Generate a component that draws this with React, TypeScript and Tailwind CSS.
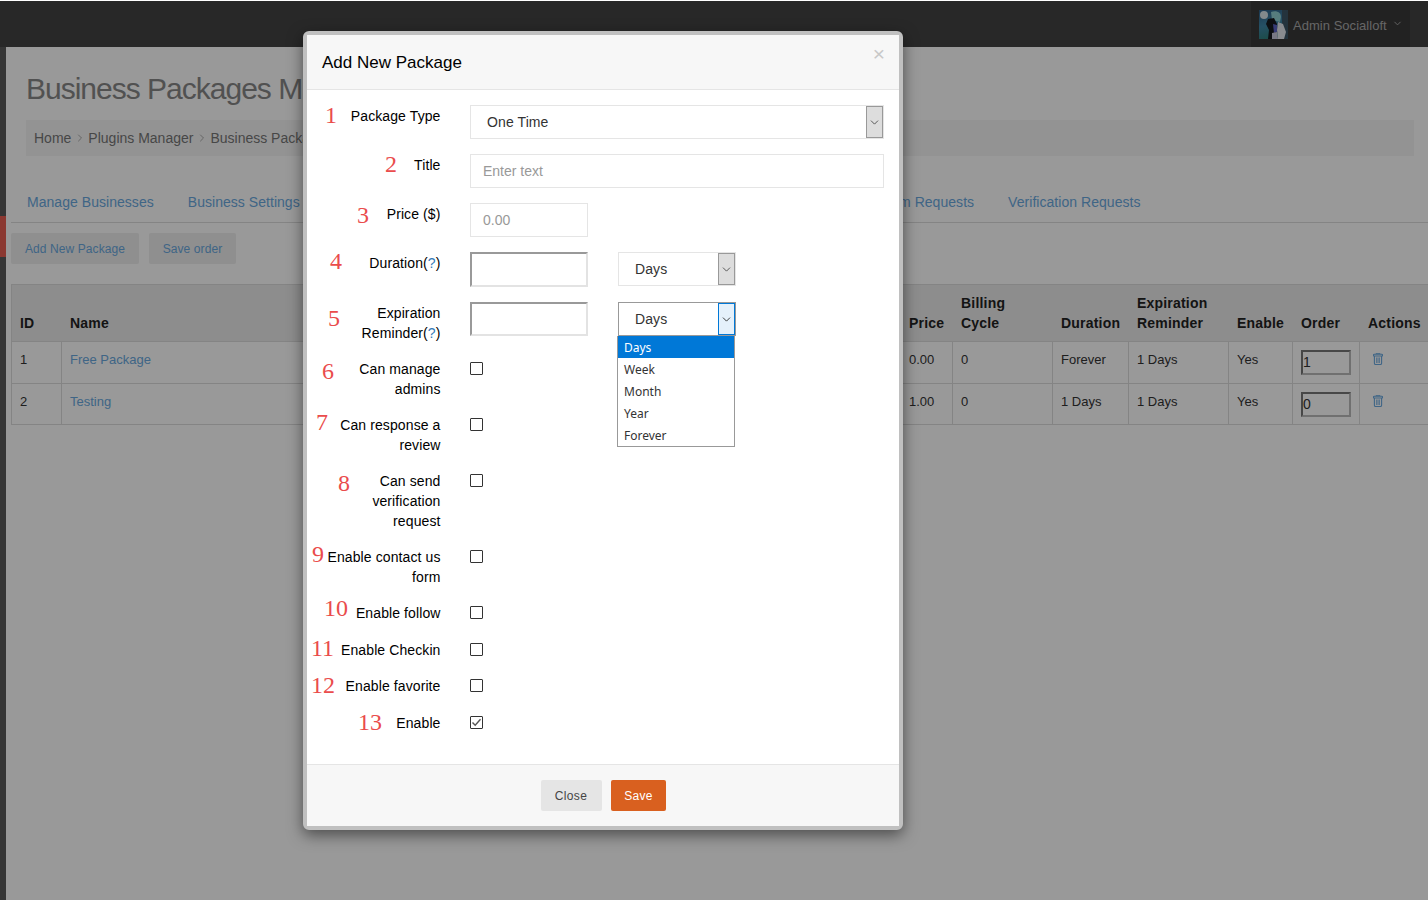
import { ChevronDown, ChevronRight } from "lucide-react"

const font = "font-['Liberation_Sans',Arial,sans-serif]"

const rows = [
  { n: "1", pos: "left-[18px] -top-[2px]", label: ["Package Type"], kind: "type", cls: "h-[34px] mb-[15px]" },
  { n: "2", pos: "left-[78px] -top-[2px]", label: ["Title"], kind: "title", cls: "h-[34px] mb-[15px]" },
  { n: "3", pos: "left-[50px] top-0", label: ["Price ($)"], kind: "price", cls: "h-[34px] mb-[15px]" },
  { n: "4", pos: "left-[23px] -top-[3px]", label: ["Duration(?)"], kind: "duration", cls: "h-[35px] mb-[15px]" },
  { n: "5", pos: "left-[21px] top-[4px]", label: ["Expiration", "Reminder(?)"], kind: "reminder", cls: "h-[41px] mb-[15px]" },
  { n: "6", pos: "left-[15px] top-[1px]", label: ["Can manage", "admins"], kind: "check", cls: "h-[41px] mb-[15px]" },
  { n: "7", pos: "left-[9px] -top-[4px]", label: ["Can response a", "review"], kind: "check", cls: "h-[41px] mb-[15px]" },
  { n: "8", pos: "left-[31px] top-[1px]", label: ["Can send", "verification", "request"], kind: "check", cls: "h-[61px] mb-[15px]" },
  { n: "9", pos: "left-[5px] -top-[4px]", label: ["Enable contact us", "form"], kind: "check", cls: "h-[41px] mb-[15px]" },
  { n: "10", pos: "left-[17px] -top-[6px]", label: ["Enable follow"], kind: "check", cls: "h-[21px] mb-[15.6px]" },
  { n: "11", pos: "left-[4px] -top-[3px]", label: ["Enable Checkin"], kind: "check", cls: "h-[21px] mb-[15.6px]" },
  { n: "12", pos: "left-[4px] -top-[2px]", label: ["Enable favorite"], kind: "check", cls: "h-[21px] mb-[15.6px]" },
  { n: "13", pos: "left-[51px] -top-[2px]", label: ["Enable"], kind: "checked", cls: "h-[21px] mb-[16.2px]" },
]

const packages = [
  { id: "1", name: "Free Package", price: "0.00", duration: "Forever", order: "1", h: "h-[42px]" },
  { id: "2", name: "Testing", price: "1.00", duration: "1 Days", order: "0", h: "h-[41px]" },
]

function Avatar() {
  return (
    <svg width="29" height="29" viewBox="0 0 29 29" className="block">
      <defs>
        <linearGradient id="night" x1="0" y1="0" x2="0.3" y2="1">
          <stop offset="0" stopColor="#2f5f88" />
          <stop offset="0.55" stopColor="#3f86a8" />
          <stop offset="1" stopColor="#2f7f7a" />
        </linearGradient>
      </defs>
      <rect width="29" height="29" fill="url(#night)" />
      <path d="M23 0h6v29h-4l-2-15z" fill="#3c5566" />
      <circle cx="5" cy="5" r="4" fill="#d9e4ea" />
      <path d="M12 2c5-2 10 0 10 5l-1 5-8-2z" fill="#8fd0d2" />
      <path d="M9 9l6-1 3 6 1 7-3 8H9l1-9-3-6z" fill="#16191f" />
      <path d="M19 12l5 2 3 8-2 7h-6l-1-9z" fill="#e4e8ef" />
      <path d="M14 14l4 1v7l-3 1z" fill="#5b63c4" />
      <path d="M13 23l5-1 1 7h-6z" fill="#c9c9dc" />
    </svg>
  )
}

function TrashIcon() {
  return (
    <svg width="10" height="12" viewBox="0 0 10 12" fill="none" stroke="currentColor" className="block">
      <rect x="0.5" y="1.2" width="9" height="1.8" rx="0.8" strokeWidth="1.1" />
      <path d="M1.4 3v7.2c0 .8.5 1.3 1.2 1.3h4.8c.7 0 1.2-.5 1.2-1.3V3" strokeWidth="1.1" />
      <path d="M3.6 4.5v5.5M5 4.5v5.5M6.4 4.5v5.5" strokeWidth="0.8" />
      <path d="M3 1V.5h4V1" strokeWidth="0.8" />
    </svg>
  )
}

function SelectBox({ value, focused }: { value: string; focused?: boolean }) {
  return (
    <div className={`flex h-full w-full items-center border bg-white pl-4 text-[14px] tracking-[0.1px] text-[#333] ${focused ? "border-[#999]" : "border-[#e5e5e5]"}`}>
      <span className="flex-1">{value}</span>
      <span className={`flex h-full w-[17px] items-center justify-center border ${focused ? "border-[#0078d7] bg-[#e5f1fb] text-[#222]" : "border-[#999] bg-[#ddd] text-[#444]"}`}>
        <ChevronDown size={13} strokeWidth={1.6} />
      </span>
    </div>
  )
}

function Checkbox({ checked }: { checked?: boolean }) {
  return (
    <span className="mt-[4px] flex h-[13px] w-[13px] items-center justify-center rounded-[1px] border border-[#333] bg-white">
      {checked && (
        <svg width="11" height="11" viewBox="0 0 11 11" fill="none" stroke="#555" strokeWidth="1.4">
          <path d="M1.5 5.5l2.7 2.8 5.3-6" />
        </svg>
      )}
    </span>
  )
}

function Control({ kind }: { kind: string }) {
  if (kind === "type")
    return (
      <div className="h-[34px] w-[414px]">
        <SelectBox value="One Time" />
      </div>
    )
  if (kind === "title")
    return <div className="flex h-[34px] w-[414px] items-center border border-[#e5e5e5] pl-3 text-[14px] text-[#999]">Enter text</div>
  if (kind === "price")
    return <div className="flex h-[34px] w-[118px] items-center border border-[#e5e5e5] pl-3 text-[14px] text-[#999]">0.00</div>
  if (kind === "duration" || kind === "reminder") {
    const focused = kind === "reminder"
    return (
      <div className="flex gap-[30px]">
        <div className={`w-[118px] border-2 border-t-[#999] border-r-[#e3e3e3] border-b-[#e3e3e3] border-l-[#999] ${focused ? "h-[34px]" : "h-[35px]"}`} />
        <div className="relative h-[34px] w-[118px]">
          <SelectBox value="Days" focused={focused} />
          {focused && (
            <ul className="absolute left-[-1px] top-[34px] z-10 w-[118px] border border-t-0 border-[#999] bg-white font-['Noto_Sans',sans-serif] text-[12px] leading-[22px] text-[#333]">
              <li className="h-[22px] bg-[#0078d7] pl-[6px] pt-px text-white">Days</li>
              <li className="h-[22px] pl-[6px] pt-px">Week</li>
              <li className="h-[22px] pl-[6px] pt-px">Month</li>
              <li className="h-[22px] pl-[6px] pt-px">Year</li>
              <li className="h-[22px] pl-[6px] pt-px">Forever</li>
            </ul>
          )}
        </div>
      </div>
    )
  }
  return <Checkbox checked={kind === "checked"} />
}

function Label({ text }: { text: string }) {
  if (text.endsWith("(?)")) {
    return (
      <div>
        {text.slice(0, -3)}(<span className="text-[#337ab7]">?</span>)
      </div>
    )
  }
  return <div>{text}</div>
}

function PackageModal() {
  return (
    <div className="absolute left-[303px] top-[31px] z-20 w-[600px] rounded-[6px] border-4 border-[#c0c0c0] bg-white shadow-[0_5px_15px_rgba(0,0,0,0.5)]">
      <div className="flex h-[55px] items-start justify-between border-b border-[#e5e5e5] bg-[#f7f7f7] pl-[15px] pr-[14px]">
        <h4 className="pt-[18px] text-[17px] leading-5 text-black">Add New Package</h4>
        <span className="pt-[7px] text-[21px] leading-6 text-[#c8c8c8]">×</span>
      </div>
      <div className="py-[15px]">
        {rows.map((r) => (
          <div key={r.n} className={`flex ${r.cls}`}>
            <div className="relative w-[133.5px] pt-px text-right text-[14px] leading-5 tracking-[0.1px] text-black">
              <span className={`absolute font-['Liberation_Serif',serif] text-[24px] leading-6 tracking-normal text-[#ea4c4c] ${r.pos}`}>{r.n}</span>
              {r.label.map((l) => (
                <Label key={l} text={l} />
              ))}
            </div>
            <div className="ml-[29.5px]">
              <Control kind={r.kind} />
            </div>
          </div>
        ))}
      </div>
      <div className="flex h-[62px] items-center justify-center gap-[9px] border-t border-[#e5e5e5] bg-[#f7f7f7]">
        <button className="h-[31px] w-[61px] rounded-[2px] bg-[#e5e5e5] pt-[2px] text-[12px] tracking-[0.4px] text-[#444]">Close</button>
        <button className="h-[31px] w-[55px] rounded-[2px] bg-[#d9601f] pl-px pt-[2px] text-[12px] tracking-[0.3px] text-white">Save</button>
      </div>
    </div>
  )
}

export default function App() {
  return (
    <div className={`relative h-[900px] overflow-hidden bg-white pt-px ${font}`}>
      <header className="flex h-[46px] justify-end bg-[#444] pr-[18px]">
        <div className="flex w-[159px] items-center bg-[#3a3a3a] pl-2 text-[13px] tracking-[0.03px] text-[#aaa]">
          <Avatar />
          <span className="ml-[5px] pt-[4px]">Admin Socialloft</span>
          <ChevronDown size={11} className="ml-[5px] -mt-[2px]" />
        </div>
      </header>

      <div className="flex h-[853px]">
        <aside className="w-[6px] shrink-0 bg-[#5a5a5a] pt-[169px]">
          <div className="h-[41px] bg-[#e85e53]" />
        </aside>
        <main className="min-w-0 flex-1 bg-white pt-[22px]">
          <h1 className="ml-[20px] whitespace-nowrap text-[30px] leading-[40px] tracking-[-1px] text-[#888]">Business Packages Manager</h1>
          <div className="ml-[20px] mr-[14px] mt-[11px] flex h-[36px] items-center gap-[2.5px] bg-[#f5f5f5] pl-2 text-[14px] text-[#777]">
            <span>Home</span>
            <ChevronRight size={12} className="text-[#aaa]" />
            <span>Plugins Manager</span>
            <ChevronRight size={12} className="text-[#aaa]" />
            <span>Business Packages</span>
          </div>
          <nav className="ml-[5px] mt-[28px] flex h-[39px] gap-[34px] whitespace-nowrap border-b border-[#ddd] pl-4 pt-[8px] text-[14px] leading-5 tracking-[0.04px] text-[#6aa9e0]">
            <span>Manage Businesses</span>
            <span>Business Settings</span>
            <span className="ml-[541px]">Claim Requests</span>
            <span>Verification Requests</span>
          </nav>
          <div className="ml-[5px] mt-[10px] flex gap-[10px] text-[12px] tracking-[0.1px] text-[#6aa9e0]">
            <span className="flex h-[31px] w-[128px] items-center justify-center rounded-[2px] bg-[#eee]">Add New Package</span>
            <span className="flex h-[31px] w-[87px] items-center justify-center rounded-[2px] bg-[#eee]">Save order</span>
          </div>
          <table className="ml-[5px] mt-[20px] w-[1439px] table-fixed border-collapse border border-[#ddd] text-[13px] text-[#333]">
            <colgroup>
              <col className="w-[50px]" />
              <col className="w-[839px]" />
              <col className="w-[52px]" />
              <col className="w-[100px]" />
              <col className="w-[76px]" />
              <col className="w-[100px]" />
              <col className="w-[64px]" />
              <col className="w-[67px]" />
              <col className="w-[91px]" />
            </colgroup>
            <thead>
              <tr className="h-[57px] border-b border-[#ddd] bg-[#ececec] text-left align-bottom text-[14px] font-bold leading-5 tracking-[0.2px] text-[#222]">
                <th className="pb-2 pl-2 pr-0">ID</th>
                <th className="pb-2 pl-[8.5px] pr-0">Name</th>
                <th className="pb-2 pl-[8.5px] pr-0">Price</th>
                <th className="pb-2 pl-[8.5px] pr-0">Billing<br />Cycle</th>
                <th className="pb-2 pl-[8.5px] pr-0">Duration</th>
                <th className="pb-2 pl-[8.5px] pr-0">Expiration<br />Reminder</th>
                <th className="pb-2 pl-[8.5px] pr-0">Enable</th>
                <th className="pb-2 pl-[8.5px] pr-0">Order</th>
                <th className="pb-2 pl-[8.5px] pr-0">Actions</th>
              </tr>
            </thead>
            <tbody>
              {packages.map((p) => (
                <tr key={p.id} className={`${p.h} border-b border-[#ddd] align-top leading-5`}>
                  <td className="border-r border-[#ddd] px-2 pt-2">{p.id}</td>
                  <td className="border-r border-[#ddd] px-2 pt-2 text-[#6aa9e0]">{p.name}</td>
                  <td className="border-r border-[#ddd] px-2 pt-2">{p.price}</td>
                  <td className="border-r border-[#ddd] px-2 pt-2">0</td>
                  <td className="border-r border-[#ddd] px-2 pt-2">{p.duration}</td>
                  <td className="border-r border-[#ddd] px-2 pt-2">1 Days</td>
                  <td className="border-r border-[#ddd] px-2 pt-2">Yes</td>
                  <td className="border-r border-[#ddd] px-2 pt-2">
                    <div className="flex h-[25px] w-[50px] items-center border-2 border-t-[#777] border-r-[#bbb] border-b-[#bbb] border-l-[#777] pb-[2px] text-[14px]">{p.order}</div>
                  </td>
                  <td className="pl-[13px] pt-[11px] text-[#6aa9e0]">
                    <TrashIcon />
                  </td>
                </tr>
              ))}
            </tbody>
          </table>
        </main>
      </div>

      <div className="absolute inset-x-0 bottom-0 top-px z-10 bg-black/40" />
      <PackageModal />
    </div>
  )
}
